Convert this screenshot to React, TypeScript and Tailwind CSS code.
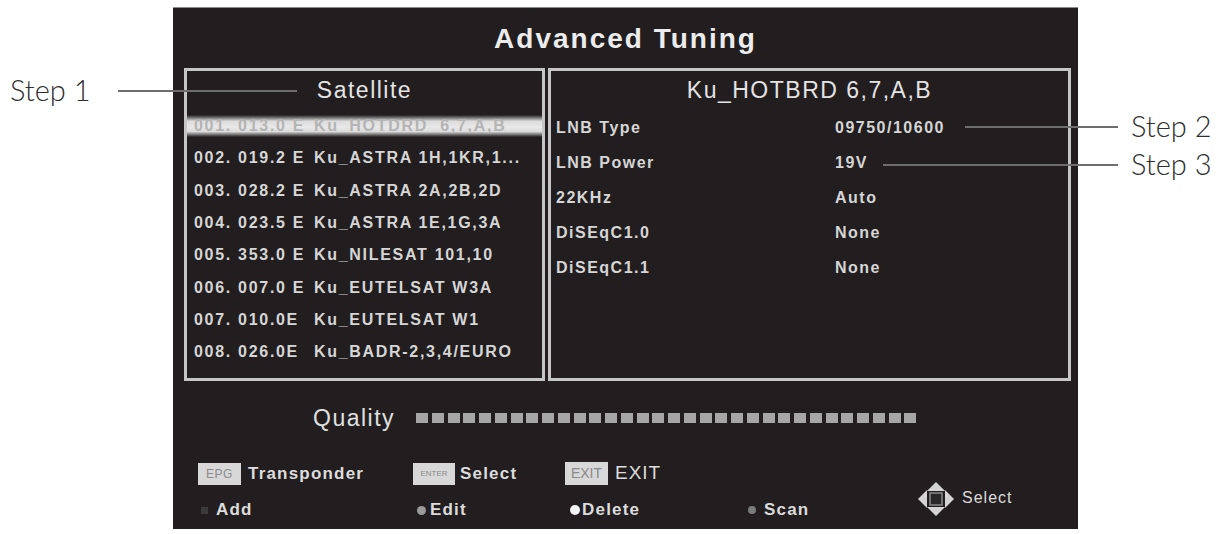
import React from "react";

const sats: [string, string][] = [
  ["001. 013.0 E", "Ku_HOTDRD  6,7,A,B"],
  ["002. 019.2 E", "Ku_ASTRA 1H,1KR,1..."],
  ["003. 028.2 E", "Ku_ASTRA 2A,2B,2D"],
  ["004. 023.5 E", "Ku_ASTRA 1E,1G,3A"],
  ["005. 353.0 E", "Ku_NILESAT 101,10"],
  ["006. 007.0 E", "Ku_EUTELSAT W3A"],
  ["007. 010.0E", "Ku_EUTELSAT W1"],
  ["008. 026.0E", "Ku_BADR-2,3,4/EURO"],
];

const params: [string, string][] = [
  ["LNB Type", "09750/10600"],
  ["LNB Power", "19V"],
  ["22KHz", "Auto"],
  ["DiSEqC1.0", "None"],
  ["DiSEqC1.1", "None"],
];

function DirIcon() {
  return (
    <svg width="38" height="36" viewBox="0 0 38 36">
      <polygon points="19,1 10,10 28,10" fill="#d4d4d4" />
      <polygon points="19,35 10,26 28,26" fill="#d4d4d4" />
      <polygon points="1,18 10,9 10,27" fill="#d4d4d4" />
      <polygon points="37,18 28,9 28,27" fill="#d4d4d4" />
      <rect x="13" y="12" width="12" height="12" fill="#2a2728" stroke="#8a8a8a" strokeWidth="1.5" />
    </svg>
  );
}

export default function App() {
  return (
    <div className="relative w-[1223px] h-[534px] bg-white overflow-hidden font-['Liberation_Sans',Arial,sans-serif]">
      <div className="pl-[173px] pt-[7px]">
        <div className="w-[905px] h-[522px] bg-[#221e1f] border-t border-[#8a8a8a] flex flex-col">
          {/* Title */}
          <div className="h-[60px] flex items-center justify-center">
            <span className="text-[28px] font-bold tracking-[2px] text-[#ececec] mt-[2px]">Advanced Tuning</span>
          </div>

          {/* Boxes */}
          <div className="flex gap-[3px] pl-[11px] pr-[7px]">
            {/* Left box */}
            <div className="w-[361px] h-[313px] border-[3px] border-[#c6c6c6] flex flex-col">
              <div className="h-[39px] flex items-center justify-center">
                <span className="text-[23px] tracking-[1.5px] text-[#e4e4e4]">Satellite</span>
              </div>
              {sats.map(([pos, name], i) => (
                <div key={i} className="relative h-[32.3px] flex items-center">
                  {i === 0 && (
                    <div className="absolute left-0 right-0 top-[5px] h-[22px] bg-[linear-gradient(to_bottom,rgba(236,236,236,0)_0%,rgba(236,236,236,0.92)_28%,rgba(240,240,240,0.96)_55%,rgba(236,236,236,0.92)_75%,rgba(236,236,236,0)_100%)]" />
                  )}
                  <div
                    className={`relative flex pl-[7px] whitespace-nowrap overflow-hidden text-[16px] font-bold tracking-[1.7px] ${
                      i === 0 ? "text-[#b4b4b4]" : "text-[#d6d6d6]"
                    }`}
                  >
                    <span className="w-[120px] shrink-0">{pos}</span>
                    <span className="whitespace-pre">{name}</span>
                  </div>
                </div>
              ))}
            </div>

            {/* Right box */}
            <div className="w-[523px] h-[313px] border-[3px] border-[#c6c6c6] flex flex-col">
              <div className="h-[39px] flex items-center justify-center">
                <span className="text-[23px] tracking-[1.5px] text-[#e4e4e4]">Ku_HOTBRD 6,7,A,B</span>
              </div>
              {params.map(([k, v], i) => (
                <div key={i} className="h-[35px] flex items-center pl-[5px] text-[16px] font-bold tracking-[1.5px] text-[#d6d6d6]">
                  <span className="w-[279px] shrink-0">{k}</span>
                  <span>{v}</span>
                </div>
              ))}
            </div>
          </div>

          {/* Quality */}
          <div className="h-[74px] flex items-center pl-[140px] gap-[21px]">
            <span className="text-[23px] tracking-[1.5px] text-[#e0e0e0]">Quality</span>
            <div className="flex gap-[3.75px]">
              {Array.from({ length: 32 }).map((_, i) => (
                <div key={i} className="w-[12px] h-[10px] bg-[#a6a6a6]" />
              ))}
            </div>
          </div>

          {/* Legend */}
          <div className="pl-[25px] grid grid-cols-[215px_152px_183px_169px_1fr] grid-rows-[37px_36px] text-[17px] font-bold tracking-[1.2px] text-[#dcdcdc]">
            <div className="flex items-center gap-[7px]">
              <span className="w-[43px] h-[22px] bg-[#d8d8d8] flex items-center justify-center text-[12px] font-normal tracking-[0.5px] text-[#8a8a8a]">EPG</span>
              <span>Transponder</span>
            </div>
            <div className="flex items-center gap-[5px]">
              <span className="w-[42px] h-[22px] bg-[#d8d8d8] flex items-center justify-center text-[8px] font-normal tracking-[0px] text-[#8a8a8a]">ENTER</span>
              <span>Select</span>
            </div>
            <div className="flex items-center gap-[7px]">
              <span className="w-[43px] h-[23px] bg-[#d8d8d8] flex items-center justify-center text-[14px] font-normal tracking-[0px] text-[#8a8a8a]">EXIT</span>
              <span className="text-[19px] font-normal tracking-[1px]">EXIT</span>
            </div>
            <div />
            <div className="row-span-2 flex items-center gap-[7px] pt-[14px]">
              <DirIcon />
              <span className="text-[16px] font-normal tracking-[1px] mb-[2px]">Select</span>
            </div>

            <div className="flex items-center pl-[3px] gap-[8px]">
              <span className="w-[7px] h-[7px] bg-[#3c3a3b]" />
              <span>Add</span>
            </div>
            <div className="flex items-center pl-[4px] gap-[4px]">
              <span className="w-[9px] h-[9px] rounded-full bg-[#9a9a9a]" />
              <span>Edit</span>
            </div>
            <div className="flex items-center pl-[5px] gap-[2px]">
              <span className="w-[10px] h-[10px] rounded-full bg-[#f4f4f4]" />
              <span>Delete</span>
            </div>
            <div className="flex items-center gap-[8px]">
              <span className="w-[8px] h-[8px] rounded-full bg-[#7a7a7a]" />
              <span>Scan</span>
            </div>
          </div>
        </div>
      </div>

      {/* Step annotations (callouts over the screen) */}
      <div className="absolute left-[118px] top-[90px] w-[179px] h-[2px] bg-[#6e6e6e]" />
      <div className="absolute left-[965px] top-[126px] w-[153px] h-[2px] bg-[#6e6e6e]" />
      <div className="absolute left-[883px] top-[164px] w-[235px] h-[2px] bg-[#6e6e6e]" />
      <span className="absolute left-[10px] top-[74px] leading-[32px] text-[29px] font-light text-[#2e2e2e] font-['Lato',sans-serif]">Step 1</span>
      <span className="absolute left-[1131px] top-[110px] leading-[32px] text-[29px] font-light text-[#2e2e2e] font-['Lato',sans-serif]">Step 2</span>
      <span className="absolute left-[1131px] top-[148px] leading-[32px] text-[29px] font-light text-[#2e2e2e] font-['Lato',sans-serif]">Step 3</span>
    </div>
  );
}
